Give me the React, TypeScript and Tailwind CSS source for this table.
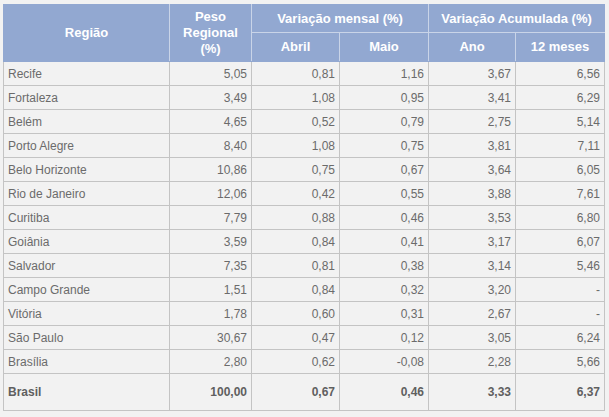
const rows: [string, string, string, string, string, string][] = [
  ["Recife", "5,05", "0,81", "1,16", "3,67", "6,56"],
  ["Fortaleza", "3,49", "1,08", "0,95", "3,41", "6,29"],
  ["Belém", "4,65", "0,52", "0,79", "2,75", "5,14"],
  ["Porto Alegre", "8,40", "1,08", "0,75", "3,81", "7,11"],
  ["Belo Horizonte", "10,86", "0,75", "0,67", "3,64", "6,05"],
  ["Rio de Janeiro", "12,06", "0,42", "0,55", "3,88", "7,61"],
  ["Curitiba", "7,79", "0,88", "0,46", "3,53", "6,80"],
  ["Goiânia", "3,59", "0,84", "0,41", "3,17", "6,07"],
  ["Salvador", "7,35", "0,81", "0,38", "3,14", "5,46"],
  ["Campo Grande", "1,51", "0,84", "0,32", "3,20", "-"],
  ["Vitória", "1,78", "0,60", "0,31", "2,67", "-"],
  ["São Paulo", "30,67", "0,47", "0,12", "3,05", "6,24"],
  ["Brasília", "2,80", "0,62", "-0,08", "2,28", "5,66"],
];

export default function App() {
  return (
    <div className="w-[609px] h-[417px] bg-[#f2f2f2] pt-[4px] pl-[3px] font-['Liberation_Sans',Arial,sans-serif]">
      <table className="w-[601px] border-collapse table-fixed text-[12px] text-[#6b6b6b]">
        <colgroup>
          <col className="w-[166px]" />
          <col className="w-[82px]" />
          <col className="w-[88px]" />
          <col className="w-[89px]" />
          <col className="w-[87px]" />
          <col className="w-[89px]" />
        </colgroup>
        <thead className="bg-[#92a8d1] text-white text-[13px] font-bold">
          <tr className="h-[28px]">
            <th rowSpan={2} className="border border-[#92a8d1] border-r-[#c9d4e8]">Região</th>
            <th rowSpan={2} className="border border-[#92a8d1] border-r-[#c9d4e8] leading-[16px]">
              Peso
              <br />
              Regional
              <br />
              (%)
            </th>
            <th colSpan={2} className="border border-[#92a8d1] border-r-[#c9d4e8] border-b-[#c9d4e8]">
              Variação mensal (%)
            </th>
            <th colSpan={2} className="border border-[#92a8d1] border-b-[#c9d4e8]">
              Variação Acumulada (%)
            </th>
          </tr>
          <tr className="h-[29px]">
            <th className="border border-[#92a8d1] border-r-[#c9d4e8] border-t-[#c9d4e8]">Abril</th>
            <th className="border border-[#92a8d1] border-r-[#c9d4e8] border-t-[#c9d4e8]">Maio</th>
            <th className="border border-[#92a8d1] border-r-[#c9d4e8] border-t-[#c9d4e8]">Ano</th>
            <th className="border border-[#92a8d1] border-t-[#c9d4e8]">12 meses</th>
          </tr>
        </thead>
        <tbody>
          {rows.map((r) => (
            <tr key={r[0]} className="h-[24px]">
              <td className="border border-[#c4c4c4] pl-[4px] text-left">{r[0]}</td>
              {r.slice(1).map((v, i) => (
                <td key={i} className="border border-[#c4c4c4] pr-[4px] text-right">
                  {v}
                </td>
              ))}
            </tr>
          ))}
          <tr className="h-[37px] font-bold text-[#5f5f5f]">
            <td className="border border-[#c4c4c4] pl-[4px] text-left">Brasil</td>
            <td className="border border-[#c4c4c4] pr-[4px] text-right">100,00</td>
            <td className="border border-[#c4c4c4] pr-[4px] text-right">0,67</td>
            <td className="border border-[#c4c4c4] pr-[4px] text-right">0,46</td>
            <td className="border border-[#c4c4c4] pr-[4px] text-right">3,33</td>
            <td className="border border-[#c4c4c4] pr-[4px] text-right">6,37</td>
          </tr>
        </tbody>
      </table>
    </div>
  );
}
